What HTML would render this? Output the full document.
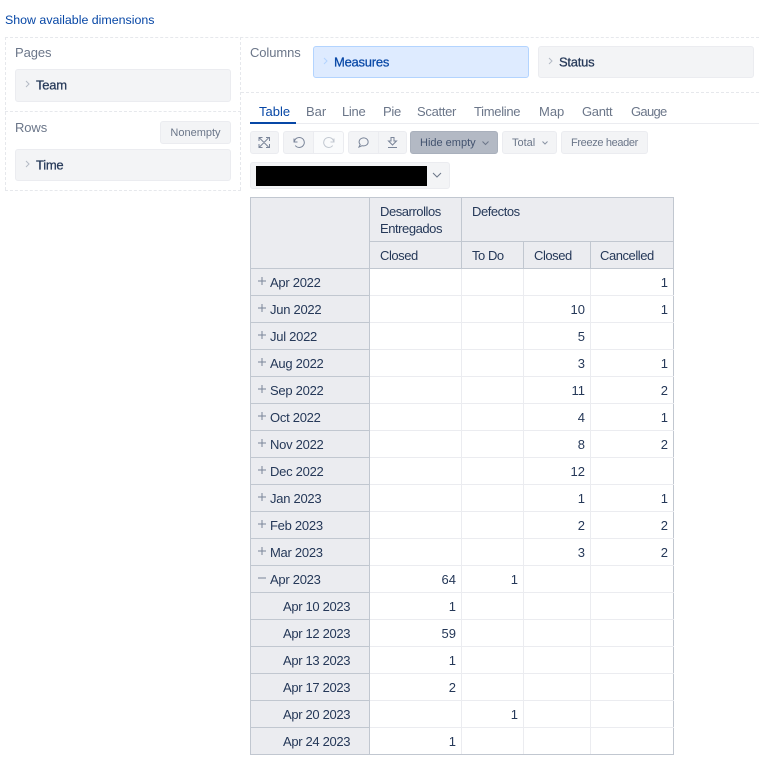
<!DOCTYPE html>
<html><head><meta charset="utf-8">
<style>
*{box-sizing:border-box}
html,body{margin:0;padding:0;background:#fff;width:759px;height:765px;overflow:hidden}
body{position:relative;font-family:"Liberation Sans",sans-serif;font-size:13px;color:#172b4d}
.a{position:absolute;white-space:nowrap}
.h{position:absolute;height:0;border-top:1px dashed #e6e8ec}
.v{position:absolute;width:0;border-left:1px dashed #e6e8ec}
.lbl{color:#6b7689;font-size:13px;letter-spacing:-.1px}
.chip{position:absolute;background:#f3f4f6;border:1px solid #ebecf0;border-radius:3px;font-weight:400;font-size:13px;letter-spacing:-.25px;color:#253858;-webkit-text-stroke:.25px #253858}
.chip span{position:absolute;top:50%;transform:translateY(-50%)}
.chip svg{position:absolute}
.btn{position:absolute;background:#f3f4f6;border:1px solid #ebecf0;border-radius:3px;color:#6b7689;font-size:11px;line-height:22px;text-align:center;height:23px}
.tab{position:absolute;top:104px;font-size:13px;color:#6b7689;line-height:16px;white-space:nowrap;letter-spacing:-.3px}
svg{display:block;overflow:visible}
table{position:absolute;left:250px;top:197px;border-collapse:collapse;table-layout:fixed;width:423px}
td,th{font-weight:400;padding:0;font-size:13px;height:27px;color:#253858;border:1px solid #ebecf0;overflow:hidden;white-space:nowrap}
th,td.r{background:#ebecf0;border-color:#c1c7d0;text-align:left;vertical-align:middle}
th{padding-left:10px;letter-spacing:-.45px}
td.n{text-align:right;padding-right:5px}
td.r{position:relative;padding-left:19px;letter-spacing:-.27px}
td.c{padding-left:32px;letter-spacing:-.33px}
td.r svg{position:absolute;left:7px;top:8px}
tr td:last-child{border-right-color:#c1c7d0}
tr:last-child td{border-bottom-color:#c1c7d0}
</style></head><body>
<div class="a" style="left:5px;top:12px;color:#0747a6;font-size:12.4px;line-height:16px">Show available dimensions</div>

<div class="h" style="left:5px;top:37px;width:754px"></div>
<div class="h" style="left:5px;top:111px;width:236px"></div>
<div class="h" style="left:5px;top:190px;width:236px"></div>
<div class="h" style="left:241px;top:92px;width:518px"></div>
<div class="v" style="left:5px;top:37px;height:153px"></div>
<div class="v" style="left:240px;top:37px;height:153px"></div>

<div class="a lbl" style="left:15px;top:45px;line-height:16px">Pages</div>
<div class="chip" style="left:15px;top:69px;width:216px;height:33px"><svg width="6" height="8" viewBox="0 0 6 8" style="left:9px;top:10px"><path d="M1 1l3 3-3 3" fill="none" stroke="#b3bac5" stroke-width="1"/></svg><span style="left:20px;margin-top:-1px">Team</span></div>
<div class="a lbl" style="left:15px;top:120px;line-height:16px">Rows</div>
<div class="btn" style="left:160px;top:121px;width:71px">Nonempty</div>
<div class="chip" style="left:15px;top:149px;width:216px;height:32px"><svg width="6" height="8" viewBox="0 0 6 8" style="left:9px;top:10px"><path d="M1 1l3 3-3 3" fill="none" stroke="#b3bac5" stroke-width="1"/></svg><span style="left:20px">Time</span></div>

<div class="a lbl" style="left:250px;top:45px;line-height:16px">Columns</div>
<div class="chip" style="left:313px;top:46px;width:216px;height:32px;background:#deebff;border-color:#b3d4ff;color:#0747a6;-webkit-text-stroke:.25px #0747a6"><svg width="6" height="8" viewBox="0 0 6 8" style="left:9px;top:10px"><path d="M1 1l3 3-3 3" fill="none" stroke="#b3d4ff" stroke-width="1"/></svg><span style="left:20px">Measures</span></div>
<div class="chip" style="left:538px;top:46px;width:216px;height:32px"><svg width="6" height="8" viewBox="0 0 6 8" style="left:9px;top:10px"><path d="M1 1l3 3-3 3" fill="none" stroke="#b3bac5" stroke-width="1"/></svg><span style="left:20px">Status</span></div>

<div class="a" style="left:250px;top:123px;width:509px;height:1px;background:#ebecf0"></div>
<div class="a" style="left:250px;top:122px;width:46px;height:2px;background:#0747a6"></div>
<div class="tab" style="left:259px;color:#0747a6;letter-spacing:0">Table</div>
<div class="tab" style="left:306px;letter-spacing:0">Bar</div>
<div class="tab" style="left:342px">Line</div>
<div class="tab" style="left:383px">Pie</div>
<div class="tab" style="left:417px">Scatter</div>
<div class="tab" style="left:474px">Timeline</div>
<div class="tab" style="left:539px;letter-spacing:0">Map</div>
<div class="tab" style="left:582px">Gantt</div>
<div class="tab" style="left:631px;letter-spacing:-.7px">Gauge</div>

<div class="btn" style="left:250px;top:131px;width:29px"><svg width="27" height="21" viewBox="0 0 27 21"><g fill="none" stroke="#7a8599" stroke-width="1"><path d="M8.500 6l9 9M17.500 6l-9 9M8 9V5.500h3.500M15 5.500h3.500V9M8 12v3.500h3.500M18.500 12v3.500H15"/></g></svg></div>
<div class="btn" style="left:283px;top:131px;width:31px;border-radius:3px 0 0 3px"><svg width="29" height="21" viewBox="0 0 29 21"><path d="M10 6.500v3.500h3.500M10.300 10a5 5 0 1 1 1 3.500" fill="none" stroke="#7a8599"/></svg></div>
<div class="btn" style="left:313px;top:131px;width:31px;border-radius:0 3px 3px 0;background:#fafbfc"><svg width="29" height="21" viewBox="0 0 29 21"><path d="M20 6.500v3.500h-3.500M19.700 10a5 5 0 1 0-1 3.500" fill="none" stroke="#c1c7d0"/></svg></div>
<div class="btn" style="left:348px;top:131px;width:31px;border-radius:3px 0 0 3px"><svg width="29" height="21" viewBox="0 0 29 21"><path d="M10 15l1.200-2.500a4.500 4 0 1 1 2 1.200z" fill="none" stroke="#7a8599"/></svg></div>
<div class="btn" style="left:378px;top:131px;width:29px;border-radius:0 3px 3px 0"><svg width="27" height="21" viewBox="0 0 27 21"><path d="M12 5.500h3v3.500h2.500L13.500 13 9.500 9H12zM9 15.500h9" fill="none" stroke="#7a8599"/></svg></div>
<div class="btn" style="left:410px;top:131px;width:88px;background:#b3b9c4;border-color:#a9b0bc;color:#42526e;text-align:left;padding-left:9px">Hide empty<svg width="7" height="4" viewBox="0 0 7 4" style="position:absolute;left:71px;top:9px"><path d="M.5.500l3 3 3-3" fill="none" stroke="#6b7689"/></svg></div>
<div class="btn" style="left:502px;top:131px;width:55px;text-align:left;padding-left:9px">Total<svg width="6" height="4" viewBox="0 0 6 4" style="position:absolute;left:39px;top:9px"><path d="M.5.500L3 3 5.500.500" fill="none" stroke="#8993a4"/></svg></div>
<div class="btn" style="left:561px;top:131px;width:87px;letter-spacing:-.35px">Freeze header</div>

<div class="btn" style="left:250px;top:162px;width:200px;height:27px"></div>
<div class="a" style="left:256px;top:166px;width:171px;height:20px;background:#000"></div>
<svg class="a" width="10" height="6" viewBox="0 0 10 6" style="left:432px;top:172px"><path d="M1 1l4 4 4-4" fill="none" stroke="#6b7689"/></svg>

<table>
<colgroup><col style="width:119px"><col style="width:92px"><col style="width:62px"><col style="width:67px"><col style="width:83px"></colgroup>
<tr><th rowspan="2"></th><th style="height:44px;line-height:17px;vertical-align:top;padding-top:5px">Desarrollos<br>Entregados</th><th colspan="3" style="vertical-align:top;padding-top:5px;line-height:17px">Defectos</th></tr>
<tr><th>Closed</th><th>To Do</th><th>Closed</th><th style="padding-left:9px">Cancelled</th></tr>
<tr><td class="r"><svg width="8" height="8" viewBox="0 0 8 8"><path d="M4 0v8M0 4h8" stroke="#7a8599" fill="none"/></svg>Apr 2022</td><td></td><td></td><td></td><td class="n">1</td></tr>
<tr><td class="r"><svg width="8" height="8" viewBox="0 0 8 8"><path d="M4 0v8M0 4h8" stroke="#7a8599" fill="none"/></svg>Jun 2022</td><td></td><td></td><td class="n">10</td><td class="n">1</td></tr>
<tr><td class="r"><svg width="8" height="8" viewBox="0 0 8 8"><path d="M4 0v8M0 4h8" stroke="#7a8599" fill="none"/></svg>Jul 2022</td><td></td><td></td><td class="n">5</td><td></td></tr>
<tr><td class="r"><svg width="8" height="8" viewBox="0 0 8 8"><path d="M4 0v8M0 4h8" stroke="#7a8599" fill="none"/></svg>Aug 2022</td><td></td><td></td><td class="n">3</td><td class="n">1</td></tr>
<tr><td class="r"><svg width="8" height="8" viewBox="0 0 8 8"><path d="M4 0v8M0 4h8" stroke="#7a8599" fill="none"/></svg>Sep 2022</td><td></td><td></td><td class="n">11</td><td class="n">2</td></tr>
<tr><td class="r"><svg width="8" height="8" viewBox="0 0 8 8"><path d="M4 0v8M0 4h8" stroke="#7a8599" fill="none"/></svg>Oct 2022</td><td></td><td></td><td class="n">4</td><td class="n">1</td></tr>
<tr><td class="r"><svg width="8" height="8" viewBox="0 0 8 8"><path d="M4 0v8M0 4h8" stroke="#7a8599" fill="none"/></svg>Nov 2022</td><td></td><td></td><td class="n">8</td><td class="n">2</td></tr>
<tr><td class="r"><svg width="8" height="8" viewBox="0 0 8 8"><path d="M4 0v8M0 4h8" stroke="#7a8599" fill="none"/></svg>Dec 2022</td><td></td><td></td><td class="n">12</td><td></td></tr>
<tr><td class="r"><svg width="8" height="8" viewBox="0 0 8 8"><path d="M4 0v8M0 4h8" stroke="#7a8599" fill="none"/></svg>Jan 2023</td><td></td><td></td><td class="n">1</td><td class="n">1</td></tr>
<tr><td class="r"><svg width="8" height="8" viewBox="0 0 8 8"><path d="M4 0v8M0 4h8" stroke="#7a8599" fill="none"/></svg>Feb 2023</td><td></td><td></td><td class="n">2</td><td class="n">2</td></tr>
<tr><td class="r"><svg width="8" height="8" viewBox="0 0 8 8"><path d="M4 0v8M0 4h8" stroke="#7a8599" fill="none"/></svg>Mar 2023</td><td></td><td></td><td class="n">3</td><td class="n">2</td></tr>
<tr><td class="r"><svg width="8" height="8" viewBox="0 0 8 8"><path d="M0 4h8" stroke="#7a8599" fill="none"/></svg>Apr 2023</td><td class="n">64</td><td class="n">1</td><td></td><td></td></tr>
<tr><td class="r c">Apr 10 2023</td><td class="n">1</td><td></td><td></td><td></td></tr>
<tr><td class="r c">Apr 12 2023</td><td class="n">59</td><td></td><td></td><td></td></tr>
<tr><td class="r c">Apr 13 2023</td><td class="n">1</td><td></td><td></td><td></td></tr>
<tr><td class="r c">Apr 17 2023</td><td class="n">2</td><td></td><td></td><td></td></tr>
<tr><td class="r c">Apr 20 2023</td><td></td><td class="n">1</td><td></td><td></td></tr>
<tr><td class="r c">Apr 24 2023</td><td class="n">1</td><td></td><td></td><td></td></tr>
</table>
</body></html>
